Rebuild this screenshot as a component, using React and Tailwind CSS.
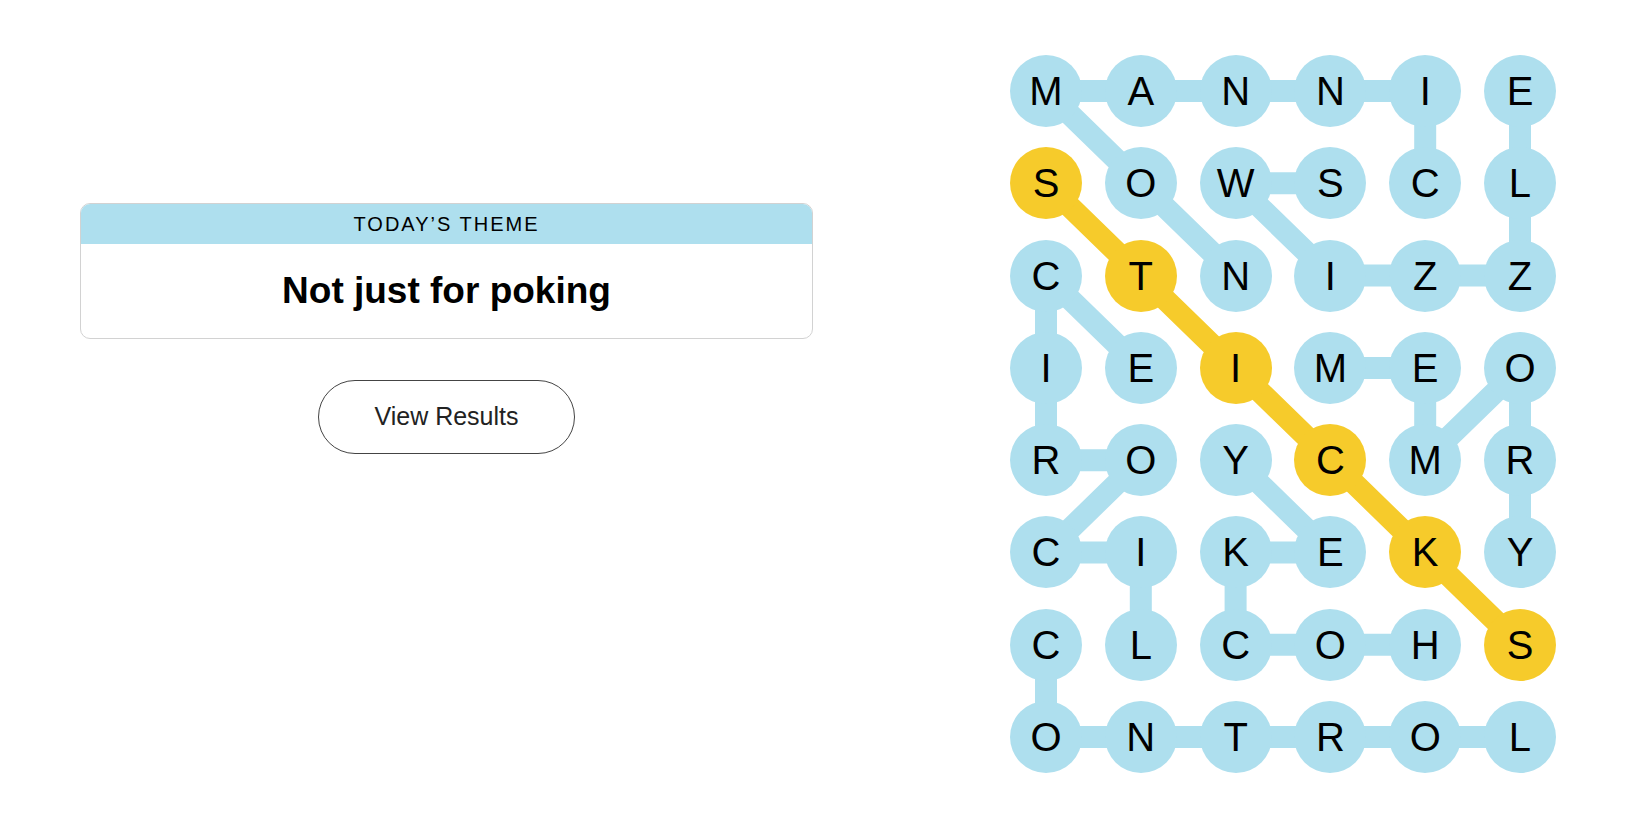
import React from 'react'

const grid = [
    'MANNIE',
    'SOWSCL',
    'CTNIZZ',
    'IEIMEO',
    'ROYCMR',
    'CIKEKY',
    'CLCOHS',
    'ONTROL',
]

// found words as [row, col] paths
const words = [
    [[1, 4], [0, 4], [0, 3], [0, 2], [0, 1], [0, 0], [1, 1], [2, 2]], // cinnamon
    [[1, 3], [1, 2], [2, 3], [2, 4], [2, 5], [1, 5], [0, 5]], // swizzle
    [[6, 1], [5, 1], [5, 0], [4, 1], [4, 0], [3, 0], [2, 0], [3, 1]], // licorice
    [[6, 4], [6, 3], [6, 2], [5, 2], [5, 3], [4, 2]], // hockey
    [[6, 0], [7, 0], [7, 1], [7, 2], [7, 3], [7, 4], [7, 5]], // control
    [[3, 3], [3, 4], [4, 4], [3, 5], [4, 5], [5, 5]], // memory
]
const spangram = [[1, 0], [2, 1], [3, 2], [4, 3], [5, 4], [6, 5]]

const DX = 94.8
const DY = 92.3
const R = 36
const cx = (c) => R + c * DX
const cy = (r) => R + r * DY

const isSpan = (r, c) => spangram.some(([a, b]) => a === r && b === c)

const Path = ({ cells, color }) => (
    <polyline
        points={cells.map(([r, c]) => `${cx(c)},${cy(r)}`).join(' ')}
        fill="none"
        stroke={color}
        strokeWidth="22"
        strokeLinejoin="round"
    />
)

const Board = () => (
    <div className="relative">
        <svg className="absolute inset-0" width="546" height="719">
            {words.map((w, i) => <Path key={i} cells={w} color="#aedfee" />)}
            <Path cells={spangram} color="#f6cb2b" />
        </svg>
        <div className="relative grid grid-cols-[repeat(6,72px)] gap-x-[22.8px] gap-y-[20.3px]">
            {grid.map((row, r) =>
                row.split('').map((ch, c) => (
                    <div
                        key={`${r}-${c}`}
                        className={`w-[72px] h-[72px] rounded-full flex items-center justify-center text-[40px] leading-none text-black ${isSpan(r, c) ? 'bg-[#f6cb2b]' : 'bg-[#aedfee]'}`}
                    >
                        {ch}
                    </div>
                ))
            )}
        </div>
    </div>
)

const App = () => {
    return (
        <div className="bg-white min-h-screen w-[1650px] h-[825px] flex font-['Liberation_Sans',Arial,sans-serif] text-[#121212]">
            {/* Left: theme + results */}
            <div className="w-[733px] ml-[80px] pt-[203px] flex flex-col items-center">
                <div className="w-full border border-[#d2d2d2] rounded-[10px] overflow-hidden">
                    <div className="h-[40px] bg-[#aedfee] flex items-center justify-center text-[20px] tracking-[2px] uppercase text-black">
                        Today’s Theme
                    </div>
                    <div className="h-[94px] flex items-center justify-center">
                        <h1 className="text-[37px] font-bold text-black">Not just for poking</h1>
                    </div>
                </div>
                <button className="mt-[41px] w-[257px] h-[74px] rounded-full border border-[#444] text-[25px] text-[#222] bg-white">
                    View Results
                </button>
            </div>

            {/* Right: board */}
            <div className="ml-[197px] pt-[55px]">
                <Board />
            </div>
        </div>
    )
}

export default App
